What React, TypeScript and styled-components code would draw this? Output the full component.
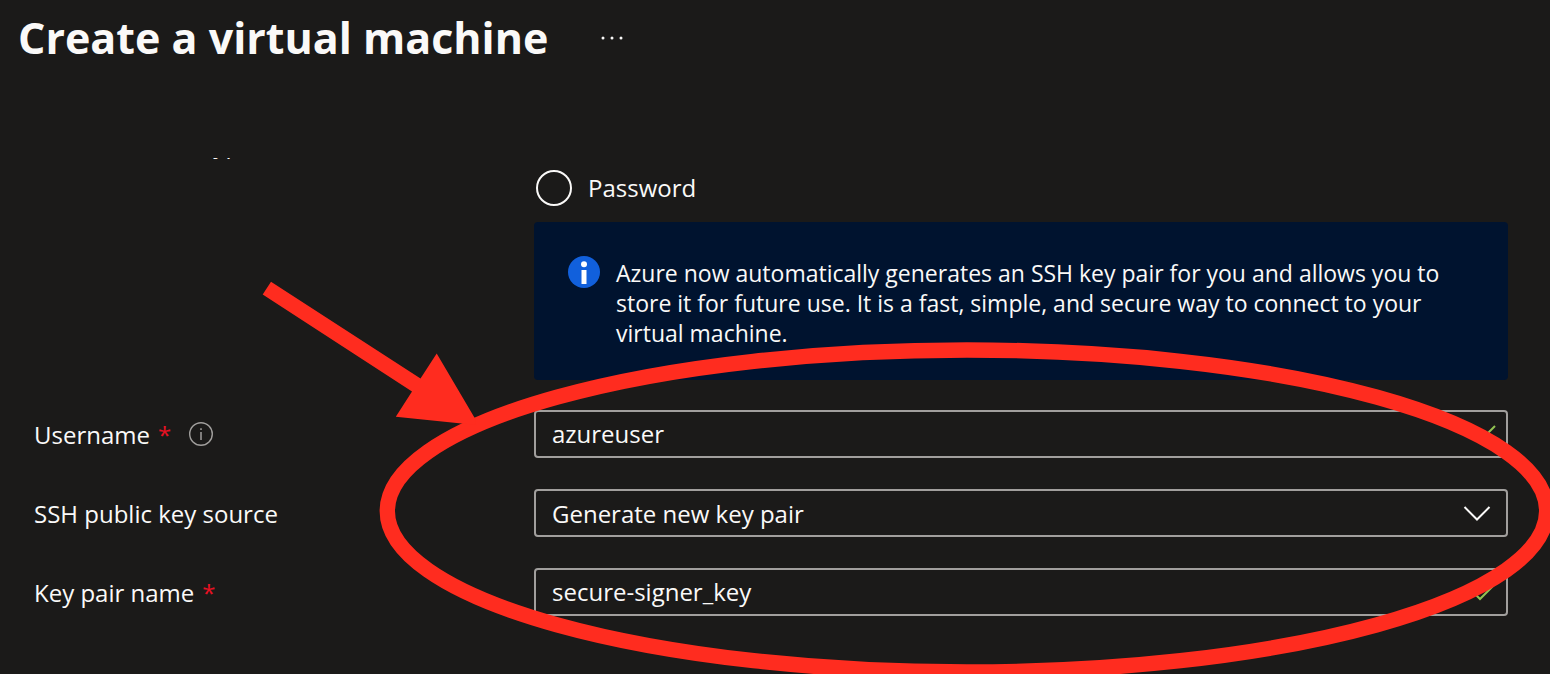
import React from "react";
import styled, { createGlobalStyle } from "styled-components";

const GlobalStyle = createGlobalStyle`
  * { box-sizing: border-box; }
  body {
    margin: 0;
    background: #1b1a19;
    color: #faf9f8;
    font-family: "Segoe UI", "Open Sans", "Noto Sans", sans-serif;
    font-size: 24px;
    font-weight: 500;
    line-height: 32px;
  }
`;

const Page = styled.main`
  position: relative;
  min-height: 100vh;
  overflow: hidden;
  padding-bottom: 24px;
`;

const Header = styled.header`
  display: flex;
  align-items: center;
  gap: 48px;
  height: 76px;
  padding-left: 18px;
`;

const Title = styled.h1`
  margin: 0;
  font-size: 43px;
  line-height: 60px;
  font-weight: 700;
`;

const MoreButton = styled.button`
  display: flex;
  padding: 0;
  border: 0;
  background: none;
  color: inherit;
`;

const Form = styled.form`
  margin-top: 82px;
  padding: 0 42px 0 34px;
  overflow: hidden;
`;

const Row = styled.div`
  display: grid;
  grid-template-columns: 500px minmax(0, 1fr);
  align-items: center;
  margin-bottom: 31px;
`;

const AuthRow = styled(Row)`
  align-items: start;
  margin-bottom: 30px;
`;

const ScrolledLabel = styled.span`
  margin-top: -30px;
`;

const RadioLabel = styled.label`
  display: flex;
  align-items: center;
  gap: 16px;
  height: 36px;
  margin: 12px 0 16px 2px;
`;

const Radio = styled.input`
  appearance: none;
  width: 36px;
  height: 36px;
  margin: 0;
  border: 2px solid #faf9f8;
  border-radius: 50%;
`;

const Banner = styled.div`
  display: flex;
  align-items: flex-start;
  gap: 16px;
  padding: 34px 34px 32px;
  border-radius: 4px;
  background: #00132f;

  svg { flex: none; }
`;

const BannerText = styled.p`
  max-width: 840px;
  margin: 2px 0 0;
  font-size: 23px;
  font-weight: 400;
  line-height: 30px;
`;

const LabelCell = styled.div`
  display: flex;
  align-items: center;
  padding-top: 2px;
`;

const Required = styled.span`
  margin-left: 8px;
  color: #e81123;
`;

const InfoButton = styled(MoreButton)`
  margin: 0 0 2px 18px;
`;

const Control = styled.div`
  display: grid;
  align-items: center;

  > * { grid-area: 1 / 1; }
  > svg { justify-self: end; pointer-events: none; }
`;

const fieldStyle = `
  width: 100%;
  height: 48px;
  padding: 0 48px 2px 16px;
  border: 2px solid #a19f9d;
  border-radius: 4px;
  background: transparent;
  color: inherit;
  font: inherit;
  outline: none;
`;

const TextInput = styled.input`${fieldStyle}`;

const Select = styled.select`
  ${fieldStyle}
  appearance: none;
  padding-top: 2px;
  padding-bottom: 0;
`;

const Annotation = styled.svg`
  position: absolute;
  top: 0;
  left: 0;
  pointer-events: none;
`;

const Check = () => (
  <svg width="36" height="20" viewBox="0 0 36 20" fill="none" stroke="#92c353" strokeWidth="2" aria-hidden="true">
    <path d="M1 10 L8 17 L23 2" />
  </svg>
);

const Chevron = () => (
  <svg width="46" height="18" viewBox="0 0 46 18" fill="none" stroke="#faf9f8" strokeWidth="2" aria-hidden="true">
    <path d="M2.5 3 L15 15.5 L27.5 3" />
  </svg>
);

const TextField = ({ id, label, value, info }: { id: string; label: string; value: string; info?: boolean }) => (
  <Row>
    <LabelCell>
      <label htmlFor={id}>{label}</label>
      <Required>*</Required>
      {info && (
        <InfoButton type="button" aria-label={`About ${label}`}>
          <svg width="24" height="24" viewBox="0 0 24 24" fill="none" stroke="#a19f9d">
            <circle cx="12" cy="12" r="11.3" strokeWidth="1.4" />
            <path d="M12 10V18M12 6.3V8" strokeWidth="1.5" />
          </svg>
        </InfoButton>
      )}
    </LabelCell>
    <Control>
      <TextInput id={id} type="text" defaultValue={value} spellCheck={false} />
      <Check />
    </Control>
  </Row>
);

export default function App() {
  return (
    <Page>
      <GlobalStyle />
      <Header>
        <Title>Create a virtual machine</Title>
        <MoreButton type="button" aria-label="More actions">
          <svg width="32" height="8" viewBox="0 0 32 8" fill="#faf9f8">
            <circle cx="7" cy="4" r="1.5" />
            <circle cx="16" cy="4" r="1.5" />
            <circle cx="25" cy="4" r="1.5" />
          </svg>
        </MoreButton>
      </Header>
      <Form>
        <AuthRow>
          <ScrolledLabel>Authentication type</ScrolledLabel>
          <div>
            <RadioLabel>
              <Radio type="radio" name="auth" />
              Password
            </RadioLabel>
            <Banner>
              <svg width="32" height="32" viewBox="0 0 32 32" aria-hidden="true">
                <circle cx="16" cy="16" r="16" fill="#1160dc" />
                <circle cx="16" cy="8.3" r="3" fill="#fff" />
                <path d="M13.5 14h5v14h-5z" fill="#fff" />
              </svg>
              <BannerText>
                Azure now automatically generates an SSH key pair for you and allows you to store it for future
                use. It is a fast, simple, and secure way to connect to your virtual machine.
              </BannerText>
            </Banner>
          </div>
        </AuthRow>
        <TextField id="username" label="Username" value="azureuser" info />
        <Row>
          <LabelCell>
            <label htmlFor="key-source">SSH public key source</label>
          </LabelCell>
          <Control>
            <Select id="key-source">
              <option>Generate new key pair</option>
            </Select>
            <Chevron />
          </Control>
        </Row>
        <TextField id="key-name" label="Key pair name" value="secure-signer_key" />
      </Form>
      <Annotation width="1560" height="690" viewBox="0 0 1560 690" aria-hidden="true">
        <ellipse cx="967" cy="511" rx="579.7" ry="161" fill="none" stroke="#ff2c1f" strokeWidth="15.4" />
        <path d="M271 281.7 L420.5 378.5 L436.7 353.5 L475 418.5 L476 425 L395.8 416.7 L412 391.5 L262.7 294.5 Z" fill="#ff2c1f" />
      </Annotation>
    </Page>
  );
}
